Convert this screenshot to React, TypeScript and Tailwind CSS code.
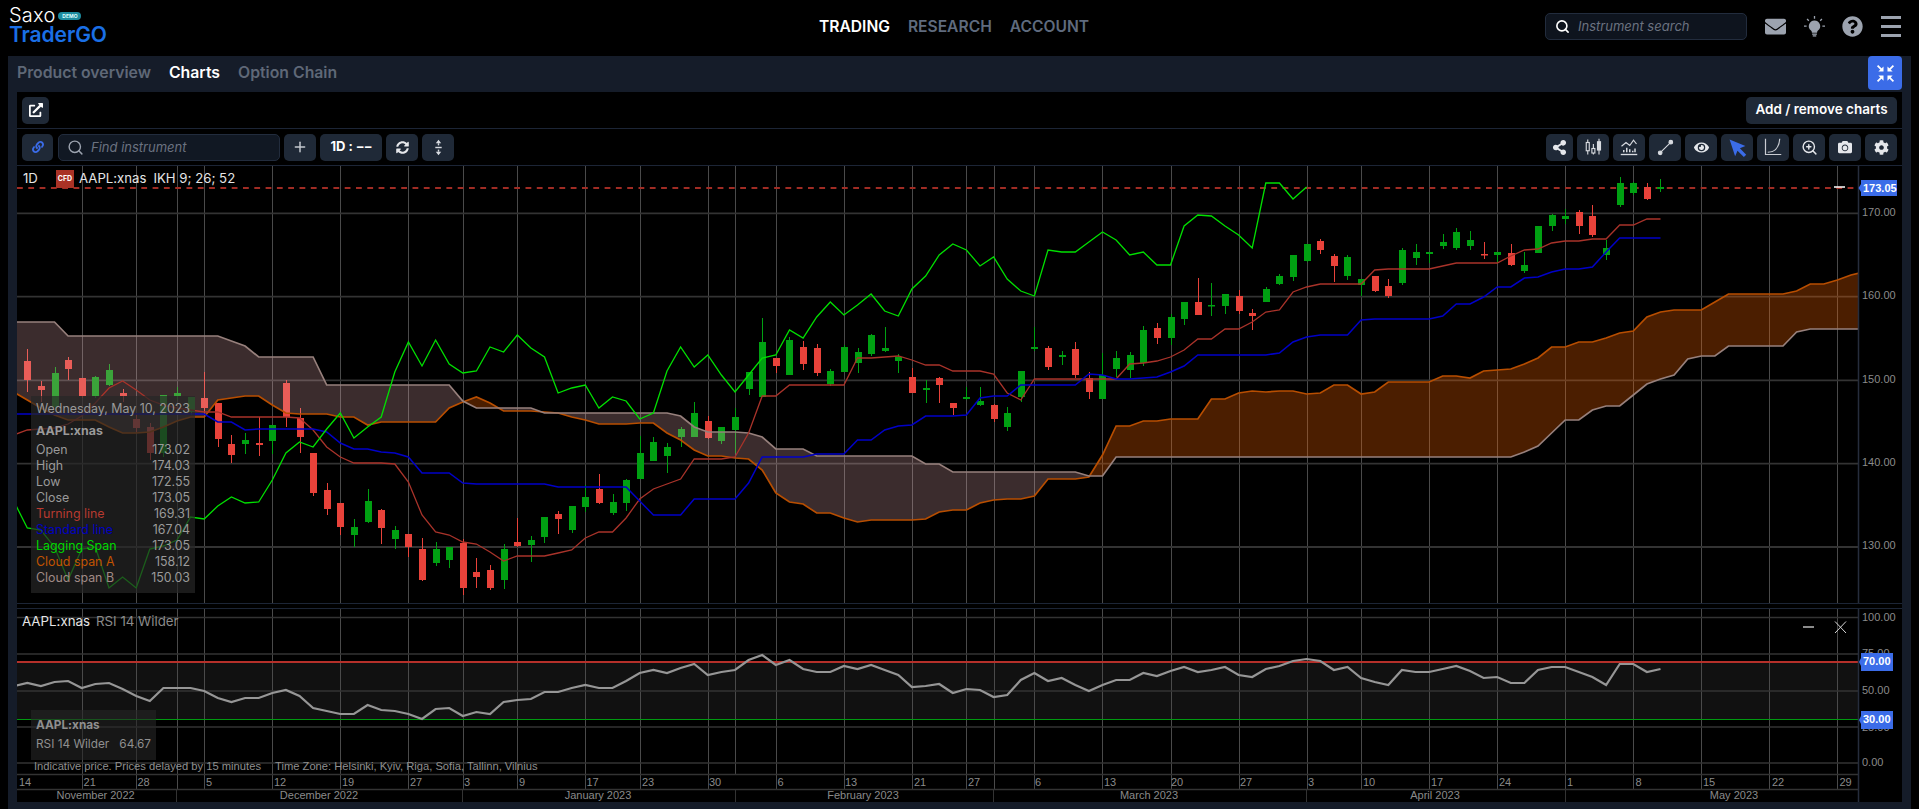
import React from "react";
import { FaExternalLinkAlt, FaLink, FaShareAlt, FaEye, FaCamera, FaCog, FaEnvelope, FaQuestionCircle, FaSyncAlt } from "react-icons/fa";
import { Search, Plus, ZoomIn } from "lucide-react";

// candles: [up, bodyTop, bodyBottom, wickTop, wickBottom]
const C: number[][] = [
[0,361,380,349,392],[0,386,390,381,402],[1,373,407,367,410],[0,360,369,357,380],[0,378,396,378,398],[1,377,396,376,398],[1,370,385,364,386],[0,393,396,389,402],[0,419,428,414,432],[0,427,453,423,460],
[1,395,453,395,457],[1,393,396,387,400],[1,397,412,397,415],[0,398,408,372,415],[0,403,439,403,447],[0,444,455,435,463],[1,440,444,433,454],[0,443,445,417,456],[1,425,441,425,454],[0,383,417,380,427],
[0,418,437,408,453],[0,453,493,453,496],[0,490,509,483,515],[0,503,527,503,535],[1,527,535,519,547],[1,501,522,489,523],[0,510,528,509,544],[1,530,539,526,549],[0,534,547,534,557],[0,549,580,538,581],
[1,549,563,542,566],[1,547,560,547,568],[0,543,588,539,595],[0,572,577,558,588],[0,570,588,565,590],[1,549,580,544,589],[0,542,546,518,547],[1,540,545,536,562],[1,517,537,517,543],[0,514,519,511,534],
[1,506,530,506,533],[1,497,507,485,512],[0,489,503,474,504],[1,502,513,494,515],[1,480,503,479,511],[1,453,479,436,479],[1,442,461,437,461],[1,447,456,443,473],[1,429,437,427,447],[1,413,437,402,437],
[0,421,438,416,439],[1,427,441,427,444],[1,417,430,408,453],[1,372,389,372,395],[1,342,397,318,397],[0,358,366,358,373],[1,340,375,337,375],[0,347,364,341,370],[0,348,373,344,376],[1,371,384,369,386],
[1,347,372,345,372],[1,352,363,348,373],[1,335,354,334,356],[1,348,351,327,352],[1,357,361,354,373],[0,377,393,368,393],[1,388,390,380,403],[0,378,385,377,403],[0,403,408,403,415],[1,397,399,387,400],
[1,401,405,387,406],[0,405,419,404,422],[1,413,427,407,431],[1,371,397,371,402],[1,347,349,327,351],[0,348,367,346,370],[1,355,357,351,365],[0,349,375,342,378],[0,378,392,372,399],[1,375,399,353,399],
[1,358,369,351,377],[1,355,370,352,378],[1,330,363,326,366],[0,328,338,323,344],[1,317,338,314,345],[1,302,319,302,325],[0,302,315,278,315],[1,305,306,283,316],[1,294,306,294,314],[0,296,311,290,314],
[0,313,316,309,330],[1,289,302,287,302],[1,276,284,274,285],[1,255,277,255,281],[1,244,261,244,262],[0,241,250,239,254],[0,256,266,254,282],[1,257,276,255,280],[1,279,285,279,296],[0,276,291,276,292],
[0,286,296,279,298],[1,250,283,248,285],[1,252,258,244,265],[1,252,254,252,263],[1,242,246,234,249],[1,232,248,228,250],[1,240,246,231,250],[0,254,255,242,259],[1,252,255,252,263],[0,253,265,244,266],
[1,265,271,252,273],[1,226,253,226,253],[1,215,226,214,231],[1,216,219,209,224],[0,212,226,210,234],[0,216,235,205,237],[1,248,255,240,260],[1,183,205,177,207],[1,183,193,182,195],[0,187,199,183,200],
[1,187,189,179,192],
];

// all series start at index -1
const A = [392,400,408,415,420,420,420,427,433,433,432,427,421,417,417,400,398,396,396,405,413,414,414,414,417,417,425,422,422,422,422,422,408,402,397,403,411,411,411,412,413,417,420,424,424,424,423,423,433,440,450,456,456,458,459,470,493,502,504,513,513,518,522,520,520,520,520,519,512,510,510,503,500,499,499,496,479,479,479,477,455,426,426,421,421,419,419,419,399,399,393,391,392,391,391,394,393,385,385,394,392,382,382,382,382,376,376,378,371,370,369,364,358,347,347,342,342,338,333,331,317,312,310,310,310,302,294,294,294,294,294,291,284,284,280,275,272];
const B = [322,322,322,322,336,336,336,336,336,336,336,336,336,336,336,336,341,346,357,357,357,357,357,385,385,385,385,385,385,385,385,385,385,401,408,408,408,408,408,413,413,413,413,413,413,413,413,413,413,416,427,432,432,432,433,437,449,449,449,456,456,456,456,456,456,456,456,464,464,472,472,472,472,472,472,472,472,472,472,476,476,457,457,457,457,457,457,457,457,457,457,457,457,457,457,457,457,457,457,457,457,457,457,457,457,457,457,457,457,457,457,452,446,433,420,420,410,406,406,395,384,379,375,359,356,356,346,346,346,346,346,332,329,329,329,329,329];
const R = [435,430,429,428,424,416,403,388,381,390,400,405,408,410,412,412,417,417,417,417,417,418,430,447,457,463,463,463,464,482,515,532,535,542,544,552,561,556,556,556,553,550,538,532,532,518,499,489,484,479,459,459,459,457,433,396,396,385,385,385,385,385,358,358,357,356,360,365,365,371,371,371,374,393,400,379,379,379,379,379,379,379,364,363,361,357,350,339,339,329,329,322,312,310,292,287,284,284,284,284,270,269,269,269,269,266,263,263,263,263,256,250,249,243,241,241,239,239,225,225,219,219];
const S = [414,414,414,414,414,414,414,414,414,414,414,414,414,414,414,422,422,430,429,429,429,429,429,432,443,449,449,452,453,457,473,473,473,483,484,484,484,484,484,484,487,487,487,487,487,487,501,515,515,515,499,499,499,499,483,457,457,457,457,454,454,454,440,440,430,426,425,416,416,416,415,398,396,396,385,385,385,385,385,374,375,379,379,378,377,372,366,355,355,355,355,355,355,353,342,337,335,335,335,320,319,319,319,319,319,316,304,304,297,287,287,278,277,272,269,269,267,252,238,238,238,238];
const RSI = [686,683,686,682,681,688,684,683,689,696,701,688,688,688,691,698,702,698,698,693,690,696,708,711,714,714,705,710,711,714,719,709,708,716,712,714,702,700,699,692,692,688,685,688,688,681,673,670,673,668,664,675,672,670,660,655,665,660,669,672,672,666,669,665,670,675,687,686,684,693,689,690,697,695,680,673,681,678,685,691,685,680,680,673,676,671,667,672,670,667,675,677,669,666,661,659,661,670,667,678,682,685,670,672,672,669,666,671,678,677,683,683,670,667,667,672,677,685,664,664,672,669];

const X = (i: number) => 27.3 + 13.61 * i;
const GRID = [4,8,11,13,18,23,28,32,36,41,45,50,52,55,60,65,69,71,74,79,84,89,94,98,103,108,113,118,123,128,133].map((i) => Math.round(X(i)) + 0.5);
const line = (arr: number[]) => arr.map((y, k) => `${k === 0 ? "M" : "L"}${X(k - 1).toFixed(1)} ${y}`).join("");
const LAG: number[] = [];
for (let i = -1; i <= 94; i++) { const c = C[i + 26]; LAG.push(c[0] ? c[1] : c[2]); }

function cloud() {
  const pink: string[] = [];
  const orange: string[] = [];
  for (let k = 0; k < A.length - 1; k++) {
    const x0 = X(k - 1), x1 = X(k);
    const d0 = A[k] - B[k], d1 = A[k + 1] - B[k + 1];
    const push = (xa: number, ya: number, yb: number, xc: number, yc: number, yd: number, up: boolean) =>
      (up ? pink : orange).push(`M${xa} ${ya}L${xc} ${yc}L${xc} ${yd}L${xa} ${yb}Z`);
    if (d0 * d1 < 0) {
      const t = d0 / (d0 - d1);
      const xm = x0 + (x1 - x0) * t;
      const ym = A[k] + (A[k + 1] - A[k]) * t;
      push(x0, A[k], B[k], xm, ym, ym, d0 > 0);
      push(xm, ym, ym, x1, A[k + 1], B[k + 1], d1 > 0);
    } else {
      push(x0, A[k], B[k], x1, A[k + 1], B[k + 1], d0 + d1 > 0);
    }
  }
  return { pink: pink.join(""), orange: orange.join("") };
}
const CL = cloud();

const MAIN_H = [213.3, 296.7, 380.3, 463.7, 547];
const PRICES: [string, number][] = [["170.00", 216], ["160.00", 299], ["150.00", 383], ["140.00", 466], ["130.00", 549]];
const AX = "Liberation Sans, Arial, sans-serif";

function MainChart() {
  return (
    <svg viewBox="17 166 1884 437" className="block w-[1884px] h-[437px]">
      <defs>
        <clipPath id="plot"><rect x="17" y="166" width="1842" height="437" /></clipPath>
      </defs>
      <g clipPath="url(#plot)">
        {GRID.map((x) => <line key={x} x1={x} x2={x} y1="166" y2="603" stroke="#4a4a4a" strokeWidth="1" />)}
        {MAIN_H.map((y) => <line key={y} x1="17" x2="1859" y1={y} y2={y} stroke="#333" strokeWidth="1.8" />)}
        <line x1="17" x2="1859" y1="188" y2="188" stroke="#a02c24" strokeWidth="2" strokeDasharray="5.8 5.5" />
        {C.map((c, i) => {
          const col = c[0] ? "#00a012" : "#e8423a";
          const x = Math.round(X(i));
          return (
            <g key={i} fill={col}>
              <rect x={x} y={c[3]} width="1" height={c[4] - c[3]} />
              <rect x={x - 3} y={c[1]} width="7" height={Math.max(c[2] - c[1], 1.5)} />
            </g>
          );
        })}
        <path d={CL.pink} fill="rgba(236,176,180,0.25)" />
        <path d={CL.orange} fill="rgba(247,100,0,0.3)" />
        <path d={line(A)} fill="none" stroke="#b84e00" strokeWidth="1.7" />
        <path d={line(B)} fill="none" stroke="#97807c" strokeWidth="1.7" />
        <path d={line(R)} fill="none" stroke="#a9332a" strokeWidth="1.3" />
        <path d={line(S)} fill="none" stroke="#0000c8" strokeWidth="1.5" />
        <path d={line(LAG)} fill="none" stroke="#00e000" strokeWidth="1.3" />
      </g>
      <line x1="1858.5" x2="1858.5" y1="166" y2="603" stroke="#262d3c" strokeWidth="1.5" />
      <line x1="1834" x2="1845" y1="187" y2="187" stroke="#ffffff" strokeWidth="1.5" />
      {PRICES.map(([t, y]) => <text key={t} x="1862" y={y} fill="#8a8a8a" fontSize="11" fontFamily={AX}>{t}</text>)}
      <path d="M1861 184L1858.5 188L1861 192Z" fill="#3b6ce8" />
      <rect x="1861" y="180" width="36" height="16" fill="#3b6ce8" />
      <text x="1863" y="192" fill="#fff" fontSize="11" fontWeight="700" fontFamily={AX}>173.05</text>
    </svg>
  );
}

const RSI_H = [617.5, 654, 691, 727, 763];
const DAYS: [string, number][] = [["14", 13.7], ["21", 81.6], ["28", 135.5], ["5", 204], ["12", 272], ["19", 340], ["27", 408], ["3", 462], ["9", 517], ["17", 584.5], ["23", 640], ["30", 707], ["6", 775.5], ["13", 843], ["21", 912], ["27", 966], ["6", 1033], ["13", 1102], ["20", 1169], ["27", 1238], ["3", 1306], ["10", 1361], ["17", 1429], ["24", 1497], ["1", 1565], ["8", 1633.5], ["15", 1701], ["22", 1770], ["29", 1837.5]];
const MONTHS: [string, number][] = [["November 2022", 95.6], ["December 2022", 319], ["January 2023", 598], ["February 2023", 863], ["March 2023", 1149], ["April 2023", 1435], ["May 2023", 1734]];
const SEP = [176, 462, 735, 993, 1306, 1565].map((v) => v + 0.5);
const DAY_X = new Set([176, 735, 993].map((v) => Math.round(v)));

function RsiChart() {
  return (
    <svg viewBox="17 609 1884 193" className="block w-[1884px] h-[193px]">
      <rect x="17" y="662" width="1842" height="57" fill="#111111" />
      {GRID.map((x) => <line key={x} x1={x} x2={x} y1="609" y2={DAY_X.has(Math.floor(x)) ? 774 : 789} stroke="#4a4a4a" strokeWidth="1" />)}
      {RSI_H.map((y) => <line key={y} x1="17" x2="1859" y1={y} y2={y} stroke="#333" strokeWidth="1.5" />)}
      <line x1="17" x2="1859" y1="774.5" y2="774.5" stroke="#333" strokeWidth="1.5" />
      <line x1="17" x2="1859" y1="789.5" y2="789.5" stroke="#333" strokeWidth="1.5" />
      {SEP.map((x) => <line key={x} x1={x} x2={x} y1="789" y2="802" stroke="#333" strokeWidth="1" />)}
      <line x1="17" x2="1859" y1="662" y2="662" stroke="#b5302a" strokeWidth="2" />
      <line x1="17" x2="1859" y1="719.5" y2="719.5" stroke="#009a10" strokeWidth="1" />
      <path d={RSI.map((y, k) => `${k === 0 ? "M" : "L"}${X(k - 1).toFixed(1)} ${y}`).join("")} fill="none" stroke="#969696" strokeWidth="2.2" />
      <line x1="1858.5" x2="1858.5" y1="609" y2="802" stroke="#262d3c" strokeWidth="1.5" />
      <line x1="1803" x2="1814" y1="627" y2="627" stroke="#c8c8c8" strokeWidth="1.4" />
      <path d="M1835 621.5L1846 633M1846 621.5L1835 633" stroke="#d8d8d8" strokeWidth="1" fill="none" />
      {[["100.00", 621], ["75.00", 657], ["50.00", 694], ["25.00", 731], ["0.00", 766]].map(([t, y]) => (
        <text key={t} x="1862" y={y} fill="#8a8a8a" fontSize="11" fontFamily={AX}>{t}</text>
      ))}
      {[["70.00", 653, 665], ["30.00", 711, 723]].map(([t, y, ty]) => (
        <g key={t as string}>
          <path d={`M1861 ${(y as number) + 5}L1859 ${(y as number) + 9}L1861 ${(y as number) + 13}Z`} fill="#3b6ce8" />
          <rect x="1861" y={y} width="32" height="18" fill="#3b6ce8" />
          <text x="1863" y={ty} fill="#fff" fontSize="11" fontWeight="700" fontFamily={AX}>{t}</text>
        </g>
      ))}
      <text x="34" y="770" fill="#8f8f8f" fontSize="11.2" fontFamily={AX}>Indicative price. Prices delayed by 15 minutes</text>
      <text x="275" y="770" fill="#8f8f8f" fontSize="11.2" fontFamily={AX}>Time Zone: Helsinki, Kyiv, Riga, Sofia, Tallinn, Vilnius</text>
      {DAYS.map(([t, x], i) => <text key={i} x={Math.max(x + 2, 19)} y="786" fill="#8a8a8a" fontSize="11" fontFamily={AX}>{t}</text>)}
      {MONTHS.map(([t, x]) => <text key={t} x={x} y="799" textAnchor="middle" fill="#8a8a8a" fontSize="11" fontFamily={AX}>{t}</text>)}
    </svg>
  );
}

function Btn({ w = "w-8", className = "", children }: { w?: string; className?: string; children: React.ReactNode }) {
  return <div className={`${w} h-[27px] rounded-[5px] bg-[#1f2937] flex items-center justify-center text-[#e5e7eb] shrink-0 ${className}`}>{children}</div>;
}

const CandlesIcon = () => (
  <svg viewBox="0 0 24 24" className="w-[18px] h-[18px]" fill="none" stroke="#d8dbe0" strokeWidth="1.5">
    <path d="M5 2v20M12.5 8v14M20 1v21" />
    <rect x="3" y="6" width="4" height="11" fill="#1f2937" />
    <rect x="10.5" y="14" width="4" height="6" fill="#1f2937" />
    <rect x="18" y="5" width="4" height="11" fill="#d8dbe0" />
  </svg>
);
const IndicatorIcon = () => (
  <svg viewBox="0 0 24 24" className="w-[18px] h-[18px]" fill="none" stroke="#d8dbe0" strokeWidth="1.6">
    <path d="M2 11l6-5 5 4 5-7 4 5" />
    <path d="M1 22h22" strokeWidth="1.8" />
    <path d="M5 19v-3M9 19v-6M13 19v-4M17 19v-2M20 19v-5" strokeWidth="2" />
  </svg>
);
const DrawLineIcon = () => (
  <svg viewBox="0 0 24 24" className="w-[17px] h-[17px]" fill="#d8dbe0" stroke="#d8dbe0" strokeWidth="1.5">
    <path d="M5 19L19 5" />
    <circle cx="4.5" cy="19.5" r="2.6" />
    <circle cx="19.5" cy="4.5" r="2.6" />
  </svg>
);
const CursorIcon = () => (
  <svg viewBox="0 0 24 24" className="w-[19px] h-[19px]" fill="#3b6ce8">
    <path d="M2 2l20 8-7 3 8 8-3 3-8-8-3 7z" />
  </svg>
);
const CurveIcon = () => (
  <svg viewBox="0 0 24 24" className="w-[18px] h-[18px]" fill="none" stroke="#c9ccd2" strokeWidth="1.6">
    <path d="M2 1v21h21" />
    <path d="M5 19c9 0 15-6 16-18" />
  </svg>
);
const SplitIcon = () => (
  <svg viewBox="0 0 24 24" className="w-[17px] h-[17px]" fill="#d8dbe0">
    <path d="M12 1l3.8 5H8.2zM12 23l-3.8-5h7.6z" />
    <rect x="11" y="6" width="2" height="3" />
    <rect x="7.5" y="11" width="9" height="2" />
    <rect x="11" y="15" width="2" height="3" />
  </svg>
);
const CompressIcon = () => (
  <svg viewBox="0 0 24 24" className="w-[19px] h-[19px]" fill="none" stroke="#fff" strokeWidth="2.2">
    <path d="M2 2l6 6M22 2l-6 6M2 22l6-6M22 22l-6-6" />
    <path d="M9.5 3v6.5H3zM14.5 3v6.5H21zM9.5 21v-6.5H3zM14.5 21v-6.5H21z" fill="#fff" strokeWidth="0" />
  </svg>
);
const BulbIcon = () => (
  <svg viewBox="0 0 24 24" className="w-[21px] h-[21px]" fill="#9ca3af">
    <path d="M12 5a6.5 6.5 0 0 0-4 11.6c.8.7 1 1.4 1 2.4h6c0-1 .2-1.7 1-2.4A6.5 6.5 0 0 0 12 5z" />
    <rect x="9.3" y="20" width="5.4" height="1.5" />
    <rect x="10" y="22" width="4" height="1.5" />
    <path d="M12 0v3M3.5 3.5l2 2M20.5 3.5l-2 2M0 11.5h3M21 11.5h3" stroke="#9ca3af" strokeWidth="1.5" />
  </svg>
);
const MenuIcon = () => (
  <div className="w-5 flex flex-col gap-[6px]">
    <div className="h-[3px] bg-[#9ca3af]" />
    <div className="h-[3px] bg-[#9ca3af]" />
    <div className="h-[3px] bg-[#9ca3af]" />
  </div>
);

function Header() {
  return (
    <div className="h-14 flex items-start shrink-0">
      <div className="w-[819px] pl-[9px] pt-[5px] shrink-0">
        <div className="flex items-center h-[20px]">
          <span className="text-[20px] font-light text-white leading-5 tracking-[0.2px]">Saxo</span>
          <span className="ml-[3px] mt-[2px] h-2 w-[23px] rounded-full bg-[#1d8b9e] text-[5px] font-bold text-[#dff] leading-2 text-center">DEMO</span>
        </div>
        <div className="text-[21px] font-semibold text-[#1a6fe6] leading-[20px] tracking-[-0.1px]">TraderGO</div>
      </div>
      <div className="flex items-center gap-[18px] h-[53px] text-[15.6px] font-semibold shrink-0">
        <span className="text-white">TRADING</span>
        <span className="text-[#5f6b7e]">RESEARCH</span>
        <span className="text-[#5f6b7e]">ACCOUNT</span>
      </div>
      <div className="ml-auto mt-[13px] mr-[18px] flex items-center">
        <div className="w-[202px] h-[27px] rounded-[5px] bg-[#0e141e] border border-[#222c3d] flex items-center pl-[9px] gap-[8px]">
          <Search className="w-[15px] h-[15px] text-white" strokeWidth={2.6} />
          <span className="italic text-[13px] text-[#6b7280]">Instrument search</span>
        </div>
        <FaEnvelope className="ml-[18px] w-[21px] h-[21px] text-[#9ca3af]" />
        <div className="ml-[18px]"><BulbIcon /></div>
        <FaQuestionCircle className="ml-[17px] w-[21px] h-[21px] text-[#9ca3af]" />
        <div className="ml-[18px]"><MenuIcon /></div>
      </div>
    </div>
  );
}

function Toolbar() {
  return (
    <div className="h-[37px] shrink-0 border-b border-[#1c2536] flex items-center px-[5px] gap-1">
      <Btn w="w-[31px]" className="bg-[#1c2a42]"><FaLink className="w-[12px] h-[12px] text-[#3b6ce8]" /></Btn>
      <div className="ml-[1px] w-[222px] h-[27px] rounded-[5px] bg-[#111823] border border-[#222c3d] flex items-center pl-2 gap-[7px]">
        <Search className="w-[17px] h-[17px] text-[#9ca3af]" strokeWidth={2} />
        <span className="italic text-[13px] leading-[27px] pt-[1px] text-[#6b7280]">Find instrument</span>
      </div>
      <Btn><Plus className="w-[16px] h-[16px] text-[#c3c7ce]" strokeWidth={2.2} /></Btn>
      <Btn w="w-[62px]">
        <span className="text-[13px] font-bold text-white">1D</span>
        <span className="text-[13px] font-bold text-white mx-[3px]">:</span>
        <span className="text-[13px] font-bold text-white tracking-[-1px]">−−</span>
      </Btn>
      <Btn><FaSyncAlt className="w-[13px] h-[13px]" /></Btn>
      <Btn><SplitIcon /></Btn>
      <div className="ml-auto flex gap-1">
        <Btn w="w-[27px]"><FaShareAlt className="w-[15px] h-[15px]" /></Btn>
        <Btn><CandlesIcon /></Btn>
        <Btn><IndicatorIcon /></Btn>
        <Btn><DrawLineIcon /></Btn>
        <Btn><FaEye className="w-[15px] h-[15px]" /></Btn>
        <Btn><CursorIcon /></Btn>
        <Btn><CurveIcon /></Btn>
        <Btn><ZoomIn className="w-[17px] h-[17px]" strokeWidth={2} /></Btn>
        <Btn><FaCamera className="w-[14px] h-[14px]" /></Btn>
        <Btn><FaCog className="w-[15px] h-[15px]" /></Btn>
      </div>
    </div>
  );
}

const ROWS: [string, string, string][] = [
  ["Open", "173.02", "text-[#9a9a9a]"],
  ["High", "174.03", "text-[#9a9a9a]"],
  ["Low", "172.55", "text-[#9a9a9a]"],
  ["Close", "173.05", "text-[#9a9a9a]"],
  ["Turning line", "169.31", "text-[#b83a30]"],
  ["Standard line", "167.04", "text-[#0000c0]"],
  ["Lagging Span", "173.05", "text-[#00d800]"],
  ["Cloud span A", "158.12", "text-[#c25400]"],
  ["Cloud span B", "150.03", "text-[#a08a86]"],
];

export default function App() {
  return (
    <div className="w-[1919px] h-[809px] bg-black overflow-hidden flex flex-col font-['Inter',sans-serif]">
      <Header />
      <div className="mx-2 flex-1 bg-[#151c29] px-[9px] flex flex-col">
        <div className="h-9 shrink-0 flex items-start justify-between">
          <div className="flex items-center h-[34px] gap-[18px] text-[15.8px] font-semibold">
            <span className="text-[#5f6877]">Product overview</span>
            <span className="text-white">Charts</span>
            <span className="text-[#5f6877]">Option Chain</span>
          </div>
          <div className="w-[34px] h-[34px] rounded-[4px] bg-[#3b6ce8] flex items-center justify-center"><CompressIcon /></div>
        </div>
        <div className="h-[710px] shrink-0 bg-black flex flex-col">
          <div className="h-[37px] shrink-0 border-b border-[#1c2536] flex items-center justify-between px-[5px]">
            <Btn w="w-[27px]"><FaExternalLinkAlt className="w-[14px] h-[14px] text-white" /></Btn>
            <div className="h-[27px] w-[151px] pb-[1px] rounded-[5px] bg-[#1f2937] flex items-center justify-center text-[13.5px] font-semibold text-white">Add / remove charts</div>
          </div>
          <Toolbar />
          <div className="relative h-[437px] shrink-0">
            <MainChart />
            <div className="absolute left-[6px] top-[4px] h-[18px] flex items-center text-[13.2px] text-[#e5e5e5]">
              <span className="w-[33px]">1D</span>
              <span className="w-[18px] h-[18px] mr-[5px] bg-[#a93226] text-white text-[7px] font-bold flex items-center justify-center">CFD</span>
              <span>AAPL:xnas</span>
              <span className="ml-[7px]">IKH 9; 26; 52</span>
            </div>
            <div className="absolute left-[14px] top-[230px] w-[164px] h-[197px] bg-[rgba(38,38,38,0.7)] px-[5px] pt-[4px] text-[12.4px] leading-4">
              <div className="text-[#9a9a9a] whitespace-nowrap mt-[1px]">Wednesday, May 10, 2023</div>
              <div className="text-[#9a9a9a] font-bold mt-[4px] mb-[1px] leading-5">AAPL:xnas</div>
              {ROWS.map(([a, b, c]) => (
                <div key={a} className="flex justify-between h-4">
                  <span className={c}>{a}</span>
                  <span className="text-[#9a9a9a]">{b}</span>
                </div>
              ))}
            </div>
          </div>
          <div className="h-[6px] shrink-0 border-y border-[#1c2536]" />
          <div className="relative h-[193px] shrink-0">
            <RsiChart />
            <div className="absolute left-[5px] top-[4px] text-[13.3px] leading-4 whitespace-nowrap">
              <span className="text-[#e5e5e5]">AAPL:xnas</span>
              <span className="ml-[6px] text-[#8a8a8a]">RSI 14 Wilder</span>
            </div>
            <div className="absolute left-[14px] top-[101px] w-[125px] h-[50px] bg-[rgba(38,38,38,0.6)] px-[5px] pt-[7px] text-[11.8px] leading-4 text-[#8f8f8f]">
              <div className="font-bold">AAPL:xnas</div>
              <div className="flex justify-between mt-[3px]"><span>RSI 14 Wilder</span><span>64.67</span></div>
            </div>
          </div>
        </div>
      </div>
    </div>
  );
}
